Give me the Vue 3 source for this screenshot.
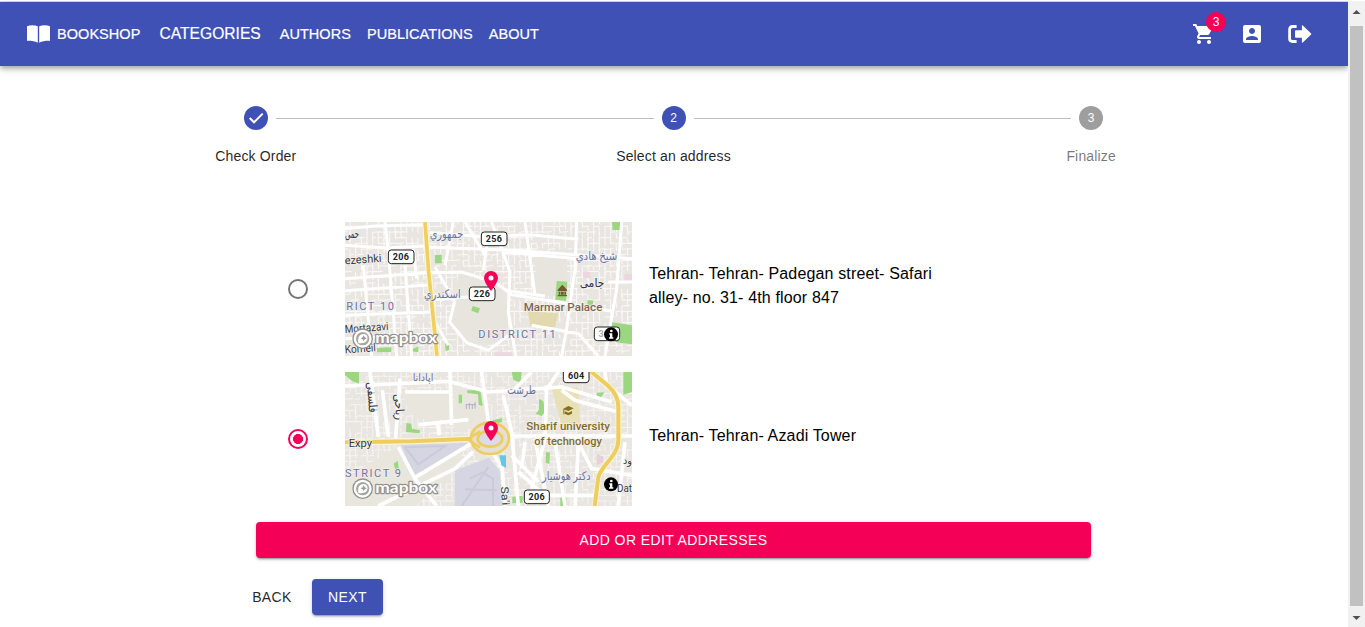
<script setup>
const links = [
  { label: 'CATEGORIES', large: true },
  { label: 'AUTHORS' },
  { label: 'PUBLICATIONS' },
  { label: 'ABOUT' },
]

const steps = [
  { label: 'Check Order', state: 'done' },
  { label: 'Select an address', state: 'active', number: 2 },
  { label: 'Finalize', state: 'pending', number: 3 },
]

// Deterministic short alleys that fill the city blocks between the main roads.
function alleys(seed) {
  let s = seed
  const rnd = () => {
    s = (s * 16807) % 2147483647
    return s / 2147483647
  }
  let d = ''
  for (let y = -20; y < 430; y += 17) {
    for (let x = -20; x < 890; x += 17) {
      const skew = 2
      if (rnd() < 0.52) d += `M${x} ${y}l${12 + Math.round(rnd() * 16)} ${-skew}`
      if (rnd() < 0.58) d += `M${x} ${y}l${skew} ${12 + Math.round(rnd() * 16)}`
    }
  }
  return d
}
const alleysA = alleys(4711)
const alleysB = alleys(1979)
</script>

<template>
  <div class="window">
    <div class="page">
      <header class="bar">
        <a class="brand">
          <svg class="book" viewBox="0 0 24 20">
            <path d="M.5 2.300C4 .8 8.300 1.100 11.300 2.300V18.800C8.500 17.300 4 16.700.5 16.900zM12.700 2.300C15.700 1.100 20 .8 23.500 2.300V16.900C20 16.700 15.500 17.300 12.700 18.800z" fill="#fff" />
          </svg>
          <span>BOOKSHOP</span>
        </a>
        <nav class="links">
          <a v-for="l in links" :key="l.label" :class="{ large: l.large }">{{ l.label }}</a>
        </nav>
        <div class="actions">
          <span class="cart">
            <svg viewBox="0 0 24 24"><path fill="#fff" d="M7 18c-1.100 0-1.990.9-1.990 2S5.900 22 7 22s2-.9 2-2-.9-2-2-2zM1 2v2h2l3.600 7.590-1.350 2.450c-.16.28-.25.61-.25.96 0 1.100.9 2 2 2h12v-2H7.420c-.14 0-.25-.11-.25-.25l.03-.12.9-1.630h7.450c.75 0 1.410-.41 1.750-1.030l3.580-6.490c.08-.14.12-.31.12-.48 0-.55-.45-1-1-1H5.210l-.94-2H1zm16 16c-1.100 0-1.990.9-1.990 2s.89 2 1.990 2 2-.9 2-2-.9-2-2-2z" /></svg>
            <span class="badge">3</span>
          </span>
          <svg viewBox="0 0 24 24"><path fill="#fff" d="M3 5v14c0 1.100.89 2 2 2h14c1.100 0 2-.9 2-2V5c0-1.100-.9-2-2-2H5c-1.110 0-2 .9-2 2zm12 4c0 1.660-1.340 3-3 3s-3-1.340-3-3 1.340-3 3-3 3 1.340 3 3zm-9 8c0-2 4-3.100 6-3.100s6 1.100 6 3.100v1H6v-1z" /></svg>
          <svg viewBox="0 0 24 24">
            <path d="M8.600 4.500H4.600Q1.600 4.500 1.600 7.500V16.500Q1.600 19.500 4.600 19.500H8.600" fill="none" stroke="#fff" stroke-width="2.800" />
            <path d="M13.900 3.900Q13.900 2.800 14.800 3.600L22.900 11.200Q23.700 12 22.900 12.800L14.800 20.400Q13.900 21.200 13.900 20.100V15.800H8Q7 15.800 7 14.800V9.200Q7 8.200 8 8.200H13.900z" fill="#fff" />
          </svg>
        </div>
      </header>

      <ol class="stepper">
        <li v-for="s in steps" :key="s.label" :class="s.state">
          <div class="rail">
            <i class="line"></i>
            <span class="dot">
              <svg v-if="s.state === 'done'" viewBox="0 0 24 24"><path d="M5.700 12L10 16.300L18.700 7.600" fill="none" stroke="#fff" stroke-width="2" /></svg>
              <template v-else>{{ s.number }}</template>
            </span>
            <i class="line"></i>
          </div>
          <span class="label">{{ s.label }}</span>
        </li>
      </ol>

      <main class="content">
        <div class="address">
          <span class="radio"></span>
          <svg class="map" viewBox="0 0 861 402">
            <rect width="861" height="402" fill="#e9e6e1" />
            <path :d="alleysA" stroke="#fbfaf8" stroke-width="3" fill="none" />
            <path d="M342 148L480 205 492 342 420 374 365 358 314 300 330 235z" fill="#e8e5df" />
            <path d="M575 95L668 78 662 225 570 218z" fill="#e8e4de" />
            <path d="M548 268L640 274 630 316 556 312z" fill="#e2d9ae" />
            <g fill="#9bd780">
              <path d="M270 99h20v25h-20zM383 252l22 7-5 15-21-8zM635 177l32 2-4 58-32-4zM801 0h26v24h-24zM797 300l64 10v57l-48-6zM96 378l43-2v14l-43 1zM192 386l28-13v18zM300 363l12-3v24l-10 3zM728 234l18 2-4 16-16-4z" />
            </g>
            <path d="M838 156h23v20h-23zM714 150h22v18h-22zM450 391h50v11h-50z" fill="#eed6df" />
            <g fill="none" stroke="#fff" stroke-width="9">
              <path d="M0 70L120 78 240 72M0 20L90 12 235 8M250 75L500 85 861 110M255 32L420 44 550 38 700 52M120 0L130 90 155 402M55 130L80 402M0 170L245 152M0 206L260 188M0 280L260 270M0 350L275 335M258 152L350 150 450 180 500 218 660 244 800 268M360 0L420 100M440 0L495 150 490 270 512 402M325 0L300 130M270 135L314 212M540 0L570 220M695 0L690 140 665 320 650 402M830 0L815 200 780 402M250 235L370 225M330 235L314 300 365 362 430 385 490 340M480 205L600 222M560 310L700 335 760 402M470 90L700 110M270 300L310 370M180 130L200 402M205 80L215 170M430 40L415 145M790 180H861" />
            </g>
            <path d="M240 0L251 150 276 402" fill="none" stroke="#fff8da" stroke-width="17" />
            <path d="M240 0L251 150 276 402" fill="none" stroke="#f0cf61" stroke-width="11" />
            <g class="place dark">
              <text x="0" y="47" textLength="42" lengthAdjust="spacingAndGlyphs" font-size="38">حمی</text>
              <text x="0" y="127" textLength="110" lengthAdjust="spacingAndGlyphs" font-size="33" transform="rotate(-4 0 127)">ezeshki</text>
              <text x="0" y="333" textLength="131" lengthAdjust="spacingAndGlyphs" font-size="33" transform="rotate(-4 0 333)">Mortazavi</text>
              <text x="0" y="394" textLength="93" lengthAdjust="spacingAndGlyphs" font-size="33" transform="rotate(-4 0 394)">Komeil</text>
              <text x="704" y="195" textLength="74" lengthAdjust="spacingAndGlyphs" font-size="37">جامی</text>
            </g>
            <g class="place blue">
              <text x="254" y="47" textLength="101" lengthAdjust="spacingAndGlyphs" font-size="36">جمهوري</text>
              <text x="237" y="228" textLength="110" lengthAdjust="spacingAndGlyphs" font-size="36">اسکندري</text>
              <text x="692" y="114" textLength="125" lengthAdjust="spacingAndGlyphs" font-size="36">شیخ هادي</text>
              <text x="4" y="265" textLength="143" font-size="33">RICT 10</text>
              <text x="400" y="349" textLength="232" font-size="33">DISTRICT 11</text>
            </g>
            <text class="place brown" x="536" y="266" textLength="236" lengthAdjust="spacingAndGlyphs" font-size="34">Marmar Palace</text>
            <path d="M638 203L652 188 666 203V207H638zM641 209h5v9h-5zM658 209h5v9h-5zM648 209h8v9h-8zM638 219h28v4h-28z" fill="#73572f" />
            <g class="shield">
              <rect x="409" y="30" width="77" height="41" rx="9" /><text x="447" y="60">256</text>
              <rect x="130" y="84" width="77" height="41" rx="9" /><text x="168" y="114">206</text>
              <rect x="373" y="195" width="77" height="41" rx="9" /><text x="411" y="225">226</text>
              <rect x="748" y="315" width="76" height="41" rx="9" /><text x="769" y="345" class="faint">3</text>
            </g>
            <g id="chrome">
              <g class="logo">
                <circle cx="53" cy="350" r="31" fill="#92928f" /><circle cx="53" cy="350" r="27" fill="#fff" />
                <circle cx="53" cy="350" r="20" fill="#a6a6a2" /><path d="M40 363Q37 344 47 338Q57 333 65 340Q71 349 64 358Q56 366 40 363z" fill="#fff" />
                <path d="M56 340l3 6 6 3-6 3-3 6-3-6-6-3 6-3z" fill="#999" />
                <text x="91" y="364" textLength="185" lengthAdjust="spacingAndGlyphs">mapbox</text>
              </g>
              <path d="M438 207Q417 181 417 168A21 21 0 0 1 459 168Q459 181 438 207z" fill="#f50057" /><circle cx="438" cy="168" r="7.500" fill="#fff" />
              <circle cx="798" cy="337" r="21" fill="#000" /><circle cx="799" cy="327" r="4" fill="#fff" /><path d="M793 334h9v12h3v4h-13v-4h3v-8h-2z" fill="#fff" />
            </g>
          </svg>
          <p>Tehran- Tehran- Padegan street- Safari alley- no. 31- 4th floor 847</p>
        </div>

        <div class="address">
          <span class="radio checked"></span>
          <svg class="map" viewBox="0 0 861 402">
            <rect width="861" height="402" fill="#e9e6e1" />
            <path :d="alleysB" stroke="#f7f5f2" stroke-width="3" fill="none" />
            <path d="M170 60L320 60 325 45L420 58 425 150 345 180 320 145 210 140zM170 215H365L330 295 210 402H0V320zM480 215L530 225 510 290 485 290z" fill="#e9e6dd" />
            <path d="M167 218L378 212 240 292 207 310zM330 295L432 257 463 295 475 402H329z" fill="#d5d6e1" />
            <path d="M180 226L300 222 220 277zM430 285L350 402M360 352L455 355M375 320L412 302 444 320V402" fill="none" stroke="#c9cbda" stroke-width="6" />
            <path d="M620 50L700 45 705 155 650 160z" fill="#e8e0b6" />
            <g fill="#9bd780">
              <path d="M184 153l15 2 2 15 24 5-1 9-41-4zM0 0h42v35L22 28 0 10zM341 68h10v26h-10zM366 55l40-1 7 48-12-4-2-31-32-4zM146 275l12-9 4 28-9 6zM500 0h30l-3 32-22-8zM582 80l13 8 5 32-10 12-18-7 10-12zM755 62l23-1-14 22-8-7zM835 0h26v60l-26 8zM646 376h18v26h-18zM502 374l31-3v21l-31 2zM444 145l27-7v12l-27 6zM603 240l12 2-2 34-11-4z" />
            </g>
            <path d="M755 245l20 9v16l-20 9z" fill="#e9cfda" />
            <g fill="none" stroke="#fff" stroke-width="11">
              <path d="M0 42L310 28 430 60 650 45 800 90M75 0L100 195M165 20L152 200M112 55L130 195M180 60H320M410 0L430 150M315 0L320 160M222 158L370 143M277 150L283 190M490 192H861M445 245L472 290 480 402M378 215L205 320M385 238L330 290 100 402M160 225L210 320 275 402M475 70L500 180 520 402M605 40L600 200 560 350M650 55L690 85 820 120M640 0L600 60M560 0L500 60M690 192L740 290 861 310M630 210L660 402M700 220L690 402M520 300L600 370H750M540 210L530 290M570 200L610 402M500 250L580 330M840 210L820 402M780 0L785 40 861 100" />
            </g>
            <path d="M463 250h20v38l-14-8z" fill="#65c7e8" />
            <g fill="none" stroke="#fff6d0" stroke-width="17"><path d="M0 211L200 208 380 200M736 -3L790 42Q820 70 820 105V205C820 250 770 280 760 315L749 402" /></g>
            <ellipse cx="435" cy="199" rx="57" ry="47" fill="#e6e0d4" /><ellipse cx="435" cy="200" rx="37" ry="24" fill="#dcdce6" />
            <g fill="none" stroke="#edcc60" stroke-width="12"><path d="M0 211L200 208 380 200M736 -3L790 42Q820 70 820 105V205C820 250 770 280 760 315L749 402" /></g>
            <g fill="none" stroke="#edcc60" stroke-width="8"><ellipse cx="435" cy="199" rx="57" ry="47" /><ellipse cx="435" cy="200" rx="37" ry="24" /><path d="M368 202L405 178M368 202L405 226" /></g>
            <g class="place dark">
              <text x="11" y="225" textLength="70" lengthAdjust="spacingAndGlyphs" font-size="32">Expy</text>
              <text x="66" y="31" textLength="92" lengthAdjust="spacingAndGlyphs" font-size="36" transform="rotate(86 66 31)">فلسفی</text>
              <text x="148" y="67" textLength="78" lengthAdjust="spacingAndGlyphs" font-size="36" transform="rotate(86 148 67)">ریاحی</text>
              <text x="467" y="344" textLength="57" lengthAdjust="spacingAndGlyphs" font-size="32" transform="rotate(86 467 344)">Sa'i</text>
              <text x="834" y="277" textLength="27" lengthAdjust="spacingAndGlyphs" font-size="30">ود</text>
              <text x="816" y="361" textLength="45" lengthAdjust="spacingAndGlyphs" font-size="31">Dat</text>
            </g>
            <g class="place blue">
              <text x="203" y="26" textLength="62" lengthAdjust="spacingAndGlyphs" font-size="32">آپادانا</text>
              <text x="487" y="67" textLength="86" lengthAdjust="spacingAndGlyphs" font-size="36">طرشت</text>
              <text x="591" y="324" textLength="146" lengthAdjust="spacingAndGlyphs" font-size="36">دکتر هوشیار</text>
              <text x="0" y="316" textLength="168" font-size="33">STRICT 9</text>
            </g>
            <path d="M364 98V111M373 93V111M382 98V111M390 90V110M362 98h30" stroke="#aeb0ca" stroke-width="3" fill="none" />
            <g class="place olive">
              <text x="544" y="175" textLength="251" lengthAdjust="spacingAndGlyphs" font-size="35">Sharif university</text>
              <text x="568" y="218" textLength="203" lengthAdjust="spacingAndGlyphs" font-size="35">of technology</text>
            </g>
            <path d="M654 111L670 102 686 109 670 117zM660 118L670 122 681 117V125L670 130 659 125zM655 112h3v15h-3z" fill="#857020" />
            <g class="shield">
              <rect x="655" y="-10" width="77" height="42" rx="9" /><text x="694" y="20">604</text>
              <rect x="538" y="354" width="75" height="41" rx="9" /><text x="575" y="384">206</text>
            </g>
            <use href="#chrome" />
          </svg>
          <p>Tehran- Tehran- Azadi Tower</p>
        </div>

        <button class="btn wide">ADD OR EDIT ADDRESSES</button>
      </main>
      <footer class="controls">
        <button class="btn text">BACK</button>
        <button class="btn primary">NEXT</button>
      </footer>
    </div>
    <aside class="scrollbar">
      <svg viewBox="0 0 17 24"><path d="M4.500 13L8.500 9L12.500 13z" fill="#505050" /></svg>
      <div class="thumb"></div>
      <svg viewBox="0 0 17 21"><path d="M4.500 10L8.500 14L12.500 10z" fill="#505050" /></svg>
    </aside>
  </div>
</template>

<style>
body { margin: 0; overflow: hidden; background: #fff; }
</style>

<style scoped>
* { box-sizing: border-box; }
.window {
  width: 1365px; height: 627px; display: flex; overflow: hidden;
  border-top: 1px solid #fff; background: #fff; color: rgba(0, 0, 0, .87);
  font-family: "Liberation Sans", Arial, sans-serif; font-size: 14px;
  box-shadow: inset 0 1px #dcdde1;
}
.page { width: 1348px; padding-top: 1px; display: flex; flex-direction: column; }
.bar {
  height: 64px; flex: none; display: flex; align-items: center; padding: 0 36px 0 26px;
  background: #3f51b5; color: #fff; font-size: 14.500px; letter-spacing: .05px;
  box-shadow: 0 2px 4px -1px rgba(0,0,0,.2), 0 4px 5px rgba(0,0,0,.14), 0 1px 10px rgba(0,0,0,.12);
}
.brand, .links { -webkit-text-stroke: .2px #fff; }
.brand { display: flex; align-items: center; gap: 6px; width: 133px; }
.book { width: 25px; height: 20px; }
.links { display: flex; align-items: center; gap: 16px; margin-left: .6px; }
.links .large { font-size: 15.600px; letter-spacing: 0; margin-right: 3px; }
.actions { margin-left: auto; display: flex; align-items: center; gap: 24px; }
.actions svg { width: 24px; height: 24px; display: block; }
.cart { position: relative; }
.badge {
  position: absolute; left: 14px; top: -10px; width: 20px; height: 20px; border-radius: 50%;
  background: #f50057; font-size: 12px; line-height: 20px; text-align: center; letter-spacing: 0;
}
.stepper { list-style: none; display: grid; grid-template-columns: repeat(3, 1fr); width: 1253px; margin: 40px 0 0 47px; padding: 0; }
.stepper li { text-align: center; }
.rail { display: flex; align-items: center; }
.line { height: 1px; flex: 1; background: #bdbdbd; }
.stepper li:first-child .line:first-child, .stepper li:last-child .line:last-child { background: none; }
.dot { width: 24px; height: 24px; margin: 0 8px; border-radius: 50%; background: #3f51b5; color: #fff; font-size: 12px; line-height: 24px; }
.dot svg { display: block; }
.pending .dot { background: #9e9e9e; }
.label { display: block; margin-top: 16px; line-height: 20px; letter-spacing: .15px; }
.pending .label { color: rgba(0, 0, 0, .54); }
.content { width: 835px; margin: 56px 0 0 256px; }
.address { display: flex; align-items: center; height: 134px; margin-bottom: 16px; padding-left: 32px; }
.radio { width: 20px; height: 20px; flex: none; border: 2px solid #757575; border-radius: 50%; margin-right: 37px; }
.radio.checked { border-color: #f50057; background: radial-gradient(circle, #f50057 0 4.700px, transparent 5.300px); }
.map { width: 287px; height: 134px; flex: none; overflow: hidden; }
.address p { width: 300px; margin: 0 0 6px 17px; font-size: 16px; line-height: 24px; letter-spacing: .15px; color: #000; }
.place { font-family: Roboto, "DejaVu Sans", sans-serif; paint-order: stroke; stroke: #f4f2ee; stroke-width: 4px; stroke-linejoin: round; }
.dark { fill: #37383c; }
.blue { fill: #6872a3; }
.brown { fill: #7b6651; font-weight: 500; }
.olive { fill: #7d6c2a; font-weight: 500; }
.shield rect { fill: #fff; stroke: #222; stroke-width: 3px; }
.shield text { font: bold 27px Roboto, sans-serif; text-anchor: middle; letter-spacing: 1px; fill: #222; }
.shield .faint { fill: #aaa; }
.logo text { font: bold 45px Lato, sans-serif; fill: #fff; stroke: #92928f; stroke-width: 7px; paint-order: stroke; stroke-linejoin: round; }
.btn { height: 36px; border: 0; border-radius: 4px; padding: 0; font-family: inherit; font-size: 14px; letter-spacing: .4px; color: #fff; }
.wide, .primary { box-shadow: 0 3px 1px -2px rgba(0,0,0,.2), 0 2px 2px rgba(0,0,0,.14), 0 1px 5px rgba(0,0,0,.12); }
.wide { display: block; width: 835px; background: #f50057; }
.controls { display: flex; gap: 8px; margin: 21px 0 0 240px; }
.text { width: 64px; background: none; color: rgba(0, 0, 0, .87); }
.primary { width: 71px; background: #3f51b5; }
.scrollbar { width: 17px; display: flex; flex-direction: column; background: #f1f1f1; }
.scrollbar svg { width: 17px; flex: none; display: block; }
.thumb { width: 13px; flex: 1; margin: 1px 2px 0; background: #c1c1c1; }
</style>
